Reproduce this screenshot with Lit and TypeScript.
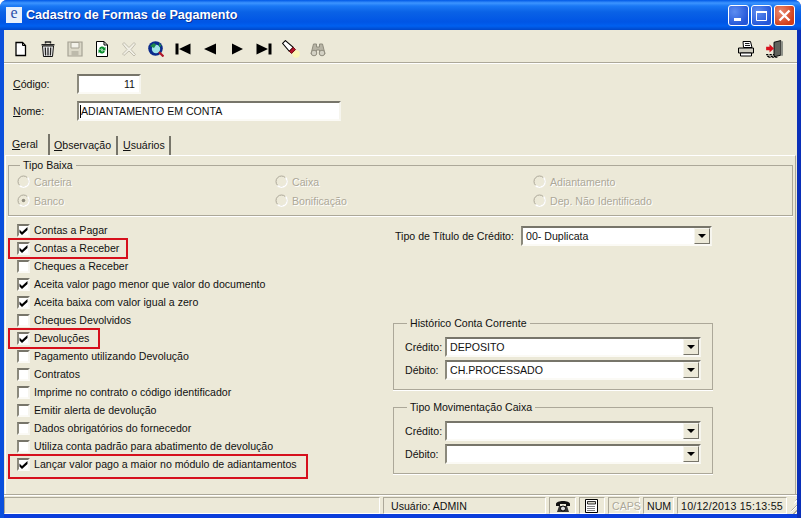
import { LitElement, css, html, svg } from 'lit';
import { customElement } from 'lit/decorators.js';

const icons: Record<string, unknown> = {
  new: svg`<path d="M3 1.500h6.500l3 3v10h-9.500z" fill="#fff" stroke="#000" stroke-width="1.300"/><path d="M9.500 1.500v3h3" fill="none" stroke="#000"/>`,
  trash: svg`<path d="M5.500 2.500V1h5v1.500M1.500 3.700h13" fill="none" stroke="#222" stroke-width="1.400"/><path d="M2.500 5h11l-1 10.500h-9z" fill="#eee" stroke="#111"/><path d="M5.300 6.500l.3 8M8 6.500v8M10.700 6.500l-.3 8" stroke="#222" stroke-width="1.300"/>`,
  save: svg`<path d="M1 1h14v14H1z" fill="#dcd9c9" stroke="#a5a294" stroke-width="1.200"/><path d="M4 1.500h8v5.500H4z" fill="#f3f2ea" stroke="#a5a294"/><path d="M4.500 10h7v5h-7z" fill="#bdbaab"/>`,
  refresh: svg`<path d="M2.500 .5h7.500l3.500 3.500V15.500h-11z" fill="#fff" stroke="#000"/><path d="M10 .5V4h3.500" fill="none" stroke="#000"/><path d="M5 7.500a3.200 3.200 0 0 1 5.500-.8l1-1v3.800H7.700l1.300-1.300a1.600 1.600 0 0 0-2.500 0z" fill="#0a8f2e"/><path d="M11 10.500a3.200 3.200 0 0 1-5.500.8l-1 1V8.500h3.800L7 9.800a1.600 1.600 0 0 0 2.500 0z" fill="#0a8f2e"/>`,
  cut: svg`<path d="M3 1.500l5 5 5-5 1.500 1.500-4.500 5.500 4.500 5-1.500 1.500L8 10l-5 4.500L1.500 13 6 8.500 1.500 3z" fill="#f1efe5" stroke="#c0bdae"/>`,
  search: svg`<circle cx="7.500" cy="7.500" r="7.300" fill="#0b2b8c"/><circle cx="8" cy="8" r="4.200" fill="#9fe3e6"/><path d="M2 5l4-3 2 2-2 3zM11 1.500l2.500 3.500-2.500 1z" fill="#1f8a4a"/><path d="M11 11l4.500 4.500" stroke="#b0172a" stroke-width="2.200"/>`,
  first: svg`<path d="M.5 2.500h3v11h-3zM15.500 2.500v11L4 8z" fill="#000"/>`,
  prev: svg`<path d="M14 2.500v11L2 8z" fill="#000"/>`,
  next: svg`<path d="M3 2.500v11L14 8z" fill="#000"/>`,
  last: svg`<path d="M.5 2.500v11L12 8zM12.500 2.500h3v11h-3z" fill="#000"/>`,
  light: svg`<circle cx="12.500" cy="12.500" r="3.300" fill="#fbf6b6"/><path d="M.5 3l2.500-2.500 7 6-3.500 3.500z" fill="#fff" stroke="#000" stroke-width=".9"/><path d="M6.500 10l3.500-3.500 2 2-3.500 3.500z" fill="#b3142a" stroke="#600" stroke-width=".8"/>`,
  find: svg`<path d="M3.500 3h3v3h3V3h3l2.500 10h-5.500V9h-3v4H1z" fill="#b7b4a5" stroke="#8f8c7e"/><circle cx="4" cy="12" r="2.800" fill="#d3d1c4" stroke="#8f8c7e"/><circle cx="12" cy="12" r="2.800" fill="#d3d1c4" stroke="#8f8c7e"/>`,
  print: svg`<path d="M5 .5h7.500l1.500 6H5.500z" fill="#fff" stroke="#000"/><path d="M.5 7h15v5H.5z" fill="#cfcdc0" stroke="#000"/><path d="M2.500 12h11v3h-11z" fill="#fff" stroke="#000"/><path d="M7 2.500h4.500M7 4.500h5" stroke="#000" stroke-width=".9"/>`,
  exit: svg`<path d="M8 2l6-1.500v13L8 15z" fill="#5f625c" stroke="#000" stroke-width=".8"/><path d="M14 1h2v13h-2z" fill="#8d9088"/><path d="M1 6h3V3.800L8 7.500l-4 3.700V9H1z" fill="#d8101c"/><path d="M1 13h7M2 14.500h7M3 15.800h9" stroke="#000" stroke-dasharray="2 1"/>`,
  phone: svg`<path d="M1 6c0-4 14-4 14 0v2h-4V6H5v2H1z" fill="#111"/><path d="M4 8h8l2 6H2z" fill="#333"/><circle cx="8" cy="10.500" r="2.500" fill="#ddd" stroke="#000"/>`,
  calc: svg`<path d="M1.500 1.500h12v13h-12z" fill="#fff" stroke="#000"/><path d="M3.500 3.500h8v2.500h-8z" fill="#d5d3c6" stroke="#000" stroke-width=".8"/><path d="M3.500 8.500h8M3.500 10.500h8M3.500 12.500h8" stroke="#000" stroke-dasharray="1 1"/>`,
};

const icon = (name: string, size = 16) =>
  html`<svg width=${size} height=${size} viewBox="0 0 16 16">${icons[name]}</svg>`;

const TOOLS = ['new', 'trash', 'save', 'refresh', 'cut', 'search', 'first', 'prev', 'next', 'last', 'light', 'find'];

// label, checked, width of the red annotation (0 = none)
const CHECKS: [string, boolean, number][] = [
  ['Contas a Pagar', true, 0],
  ['Contas a Receber', true, 120],
  ['Cheques a Receber', false, 0],
  ['Aceita valor pago menor que valor do documento', true, 0],
  ['Aceita baixa com valor igual a zero', true, 0],
  ['Cheques Devolvidos', false, 0],
  ['Devoluções', true, 92],
  ['Pagamento utilizando Devolução', false, 0],
  ['Contratos', false, 0],
  ['Imprime no contrato o código identificador', false, 0],
  ['Emitir alerta de devolução', false, 0],
  ['Dados obrigatórios do fornecedor', false, 0],
  ['Utiliza conta padrão para abatimento de devolução', false, 0],
  ['Lançar valor pago a maior no módulo de adiantamentos', true, 300],
];

@customElement('app-root')
export class AppRoot extends LitElement {
  static override styles = css`
    :host {
      display: block;
      width: 801px;
      height: 518px;
      background: #fff;
      font: 10.6px 'Liberation Sans', Arial, sans-serif;
      color: #111;
    }
    .window {
      box-sizing: border-box;
      width: 801px;
      height: 518px;
      display: flex;
      flex-direction: column;
      border-radius: 7px 7px 0 0;
      overflow: hidden;
      background: linear-gradient(90deg, #0a4fdc 0 4px, #0a3ddb 4px 797px, #0a2fb8 797px);
    }
    .title {
      flex: none;
      height: 30px;
      display: flex;
      align-items: center;
      padding: 0 6px 0 6px;
      color: #fff;
      font-size: 12.6px;
      font-weight: bold;
      text-shadow: 1px 1px 0 #0a2f96;
      background: linear-gradient(180deg, #0058e6 0, #3d95ff 3px, #1a78f5 6px, #0a62e6 12px, #0055e5 22px, #0060f0 26px, #0047c8 30px);
    }
    .logo {
      width: 16px;
      height: 16px;
      margin-right: 4px;
      background: #e8f0fb;
      color: #2a4fa8;
      font: 16px/12px 'Liberation Serif', serif;
      text-align: center;
      text-shadow: none;
    }
    .title-text {
      flex: 1;
    }
    .caps {
      display: flex;
      gap: 2px;
    }
    .cap {
      width: 21px;
      height: 21px;
      box-sizing: border-box;
      border: 1px solid #fff;
      border-radius: 3px;
      display: flex;
      align-items: center;
      justify-content: center;
      background: radial-gradient(circle at 30% 30%, #5d8df0, #2456d8 75%);
    }
    .cap.close {
      background: radial-gradient(circle at 30% 30%, #ea8a70, #cf3d18 75%);
    }
    .body {
      flex: 1;
      margin: 0 4px;
      background: #ece9d8;
      display: flex;
      flex-direction: column;
      min-height: 0;
    }
    .toolbar {
      flex: none;
      height: 33px;
      box-sizing: border-box;
      display: flex;
      align-items: center;
      padding: 6px 9px 0 3px;
      border-bottom: 1px solid #aca899;
      box-shadow: 0 1px 0 #fff;
    }
    .tool {
      width: 27px;
      display: flex;
      justify-content: center;
    }
    .spacer {
      flex: 1;
    }
    .tool.end {
      width: 28px;
    }
    .form {
      flex: none;
      height: 71px;
      box-sizing: border-box;
      padding: 11px 0 0 9px;
      display: flex;
      flex-direction: column;
      gap: 7px;
    }
    .field {
      display: flex;
      align-items: center;
    }
    .field label {
      width: 64px;
    }
    .sunken {
      box-sizing: border-box;
      height: 20px;
      background: #fff;
      border: 2px solid;
      border-color: #77756a #f6f5ee #fbfaf5 #8b897c;
      line-height: 16px;
      padding: 0 1px;
      white-space: nowrap;
    }
    .code {
      width: 64px;
      text-align: right;
      padding-right: 4px;
    }
    .name {
      width: 264px;
      display: flex;
      align-items: center;
    }
    .caret {
      width: 1px;
      height: 13px;
      background: #000;
    }
    .tabs {
      flex: none;
      height: 21px;
      display: flex;
      align-items: flex-end;
    }
    .tab {
      height: 19px;
      line-height: 18px;
      margin-left: 2px;
      border-right: 2px solid #77756a;
      box-sizing: border-box;
    }
    .tab.active {
      width: 46px;
      height: 21px;
      line-height: 20px;
      padding-left: 8px;
      margin-left: 0;
    }
    .tab.obs {
      width: 66px;
      padding-left: 2px;
    }
    .tab.usr {
      width: 51px;
      padding-left: 3px;
    }
    .panel {
      flex: 1;
      display: grid;
      grid-template-columns: 385px 1fr;
      align-content: start;
      padding: 3px 3px 0 2px;
      border-top: 1px solid #fff;
      border-left: 1px solid #fff;
      border-right: 1px solid #aca899;
      margin: 0 1px;
    }
    fieldset {
      margin: 0;
      padding: 0;
      border: 1px solid #aca899;
      box-shadow: 0 1px 0 #fff;
      min-width: 0;
    }
    legend {
      margin-left: 13px;
      padding: 0 3px;
      line-height: 13px;
    }
    .baixa {
      grid-column: 1 / -1;
      box-sizing: border-box;
      height: 57px;
      width: 785px;
    }
    .baixa legend {
      margin-left: 11px;
    }
    .radios {
      display: grid;
      grid-template-columns: 258px 258px 1fr;
      grid-auto-rows: 19px;
      padding: 0 0 0 8px;
    }
    .radio {
      display: flex;
      align-items: center;
      gap: 4px;
      color: #aca899;
      text-shadow: 1px 1px 0 #fff;
    }
    .checks {
      padding-top: 5px;
      display: flex;
      flex-direction: column;
    }
    .check {
      position: relative;
      height: 18px;
      display: flex;
      align-items: center;
      gap: 4px;
      padding-left: 9px;
    }
    .box {
      width: 13px;
      height: 13px;
      box-sizing: border-box;
      background: #fff;
      border: 2px solid;
      border-color: #77756a #f6f5ee #fbfaf5 #8b897c;
      flex: none;
      display: flex;
    }
    .mark {
      position: absolute;
      left: 0;
      top: -1px;
      height: 21px;
      box-sizing: border-box;
      border: 2px solid #d6101c;
    }
    .mark.tall {
      height: 25px;
    }
    .side {
      padding: 10px 0 0 0;
      display: flex;
      flex-direction: column;
      width: 320px;
    }
    .row {
      display: flex;
      align-items: center;
      gap: 7px;
      padding-left: 2px;
    }
    .row label {
      width: 119px;
      white-space: nowrap;
    }
    .combo {
      box-sizing: border-box;
      height: 20px;
      display: flex;
      align-items: center;
      background: #fff;
      border: 2px solid;
      border-color: #77756a #f6f5ee #fbfaf5 #8b897c;
      padding-left: 3px;
    }
    .combo span {
      flex: 1;
    }
    .arrow {
      width: 16px;
      height: 16px;
      box-sizing: border-box;
      background: #ece9d8;
      border: 1px solid;
      border-color: #f6f5ee #77756a #77756a #f6f5ee;
      display: flex;
      align-items: center;
      justify-content: center;
    }
    .arrow::before {
      content: '';
      border: 4px solid transparent;
      border-top: 4px solid #000;
      border-bottom: 0;
    }
    .wide {
      width: 191px;
    }
    .side fieldset {
      box-sizing: border-box;
      height: 73px;
      margin-bottom: 11px;
    }
    .first {
      margin-top: 71px;
    }
    .pairs {
      display: flex;
      flex-direction: column;
      gap: 3px;
      padding: 7px 0 0 11px;
    }
    .pair {
      display: flex;
      align-items: center;
    }
    .pair label {
      width: 40px;
    }
    .pair .combo {
      width: 256px;
    }
    .status {
      flex: none;
      height: 17px;
      display: flex;
      align-items: stretch;
      border-top: 1px solid #aca899;
      box-shadow: inset 0 1px 0 #fff;
      padding-top: 2px;
      gap: 3px;
    }
    .pane {
      box-sizing: border-box;
      border: 1px solid;
      border-color: #aca899 #fff #fff #aca899;
      display: flex;
      align-items: center;
      padding: 0 3px;
      white-space: nowrap;
    }
    .pane.user {
      padding-left: 7px;
    }
    .pane.icon {
      justify-content: center;
    }
    .pane.clock {
      letter-spacing: 0.25px;
    }
    .off {
      color: #aca899;
      text-shadow: 1px 1px 0 #fff;
    }
    .grip {
      flex: 1;
      background: repeating-linear-gradient(135deg, transparent 0 2px, #aca899 2px 3px, #fff 3px 4px);
      clip-path: polygon(100% 0, 100% 100%, 0 100%);
    }
    .foot {
      flex: none;
      height: 4px;
    }
  `;

  private combo(value: string, cls = '') {
    return html`<div class="combo ${cls}"><span>${value}</span><div class="arrow"></div></div>`;
  }

  private pairs(credit: string, debit: string) {
    return html`<div class="pairs">
      <div class="pair"><label>Crédito:</label>${this.combo(credit)}</div>
      <div class="pair"><label>Débito:</label>${this.combo(debit)}</div>
    </div>`;
  }

  private radio(label: string, on = false) {
    return html`<div class="radio">
      <svg width="13" height="13" viewBox="0 0 13 13">
        <circle cx="6.500" cy="6.500" r="5.500" fill="#ece9d8" stroke="#aca899" />
        <path d="M10.500 2.500a5.600 5.600 0 0 1-8 8" fill="none" stroke="#fff" stroke-width="1.500" />
        ${on ? svg`<circle cx="6.500" cy="6.500" r="1.800" fill="#8f8c7e" />` : ''}
      </svg>
      ${label}
    </div>`;
  }

  override render() {
    return html`<div class="window">
      <div class="title">
        <div class="logo">e</div>
        <div class="title-text">Cadastro de Formas de Pagamento</div>
        <div class="caps">
          <div class="cap"><svg width="13" height="13"><path d="M2 9h7v3H2z" fill="#fff" /></svg></div>
          <div class="cap"><svg width="13" height="13"><path d="M1.500 2.500h10v9h-10z" fill="none" stroke="#fff" /><path d="M1 2h11v2H1z" fill="#fff" /></svg></div>
          <div class="cap close"><svg width="13" height="13"><path d="M1.500 1.500l10 10M11.500 1.500l-10 10" stroke="#fff" stroke-width="2.400" /></svg></div>
        </div>
      </div>
      <div class="body">
        <div class="toolbar">
          ${TOOLS.map((t) => html`<div class="tool">${icon(t, t === 'light' ? 18 : 16)}</div>`)}
          <div class="spacer"></div>
          <div class="tool end">${icon('print')}</div>
          <div class="tool end">${icon('exit', 18)}</div>
        </div>
        <div class="form">
          <div class="field"><label><u>C</u>ódigo:</label><div class="sunken code">11</div></div>
          <div class="field"><label><u>N</u>ome:</label><div class="sunken name"><i class="caret"></i>ADIANTAMENTO EM CONTA</div></div>
        </div>
        <div class="tabs">
          <div class="tab active"><u>G</u>eral</div>
          <div class="tab obs"><u>O</u>bservação</div>
          <div class="tab usr"><u>U</u>suários</div>
        </div>
        <div class="panel">
          <fieldset class="baixa">
            <legend>Tipo Baixa</legend>
            <div class="radios">
              ${this.radio('Carteira')}${this.radio('Caixa')}${this.radio('Adiantamento')}
              ${this.radio('Banco', true)}${this.radio('Bonificação')}${this.radio('Dep. Não Identificado')}
            </div>
          </fieldset>
          <div class="checks">
            ${CHECKS.map(
              ([label, on, mark], i) => html`<div class="check">
                <div class="box">
                  ${on ? html`<svg width="9" height="9" viewBox="0 0 9 9"><path d="M.5 3.500l2.500 2.500L8.500 1v3L3 9 .5 6.500z" fill="#000" /></svg>` : ''}
                </div>
                ${label}
                ${mark ? html`<div class="mark ${i === 13 ? 'tall' : ''}" style="width:${mark}px"></div>` : ''}
              </div>`,
            )}
          </div>
          <div class="side">
            <div class="row"><label>Tipo de Título de Crédito:</label>${this.combo('00- Duplicata', 'wide')}</div>
            <fieldset class="first">
              <legend>Histórico Conta Corrente</legend>
              ${this.pairs('DEPOSITO', 'CH.PROCESSADO')}
            </fieldset>
            <fieldset>
              <legend>Tipo Movimentação Caixa</legend>
              ${this.pairs('', '')}
            </fieldset>
          </div>
        </div>
        <div class="status">
          <div class="pane" style="width:376px"></div>
          <div class="pane user" style="width:163px">Usuário: ADMIN</div>
          <div class="pane icon" style="width:27px">${icon('phone')}</div>
          <div class="pane icon" style="width:26px">${icon('calc')}</div>
          <div class="pane off" style="width:32px">CAPS</div>
          <div class="pane" style="width:31px">NUM</div>
          <div class="pane clock" style="width:110px">10/12/2013 15:13:55</div>
          <div class="grip"></div>
        </div>
      </div>
      <div class="foot"></div>
    </div>`;
  }
}

declare global {
  interface HTMLElementTagNameMap {
    'app-root': AppRoot;
  }
}
